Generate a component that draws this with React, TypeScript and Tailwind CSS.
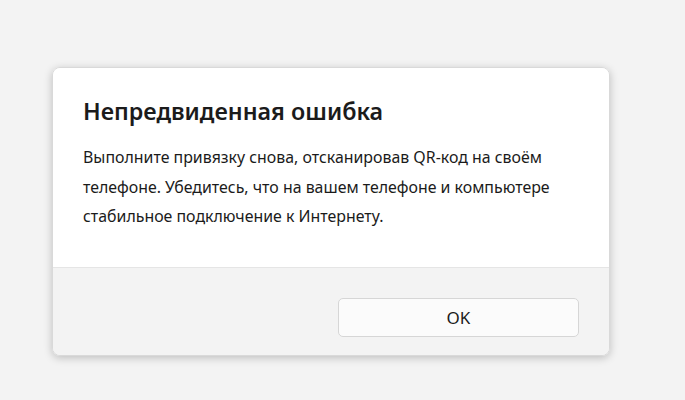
import React from "react";

export default function App() {
  return (
    <div
      className="w-[685px] h-[400px] bg-[#f3f3f3] pt-[67px] pl-[52px] overflow-hidden"
      style={{ fontFamily: '"Noto Sans", "Open Sans", sans-serif' }}
    >
      <div className="w-[558px] h-[289px] rounded-[8px] overflow-hidden shadow-[0_2px_8px_rgba(0,0,0,0.22)] border border-[#d9d9d9] flex flex-col">
        <div className="h-[200px] bg-white border-b border-[#e5e5e5] pl-[30px] pr-[24px] pt-[27px]">
          <h1 className="text-[23.3px] leading-[32px] font-semibold text-[#1b1b1b]">
            Непредвиденная ошибка
          </h1>
          <p className="mt-[16px] text-[15.9px] leading-[29.5px] text-[#1b1b1b] w-[500px]">
            Выполните привязку снова, отсканировав QR-код на своём телефоне.
            Убедитесь, что на вашем телефоне и компьютере стабильное
            подключение к Интернету.
          </p>
        </div>
        <div className="flex-1 bg-[#f3f3f3] flex justify-end items-start pt-[30px] pr-[30px]">
          <button className="w-[241px] h-[39px] rounded-[5px] bg-[#fbfbfb] border border-[#d6d6d6] text-[17px] text-[#1b1b1b]">
            OK
          </button>
        </div>
      </div>
    </div>
  );
}
